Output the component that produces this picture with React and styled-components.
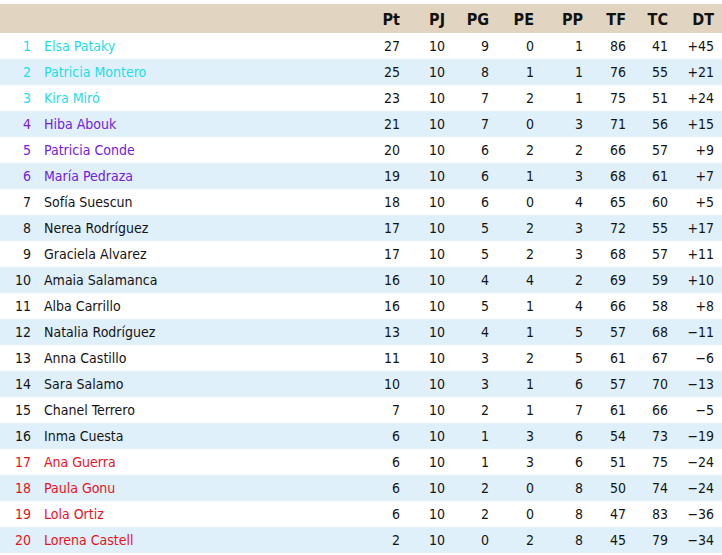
import React from 'react';
import styled, { createGlobalStyle } from 'styled-components';

const GlobalStyle = createGlobalStyle`
  html, body {
    margin: 0;
    padding: 0;
    background: #fff;
  }
`;

const rows = [
  ['Elsa Pataky', 27, 10, 9, 0, 1, 86, 41, '+45', 'top'],
  ['Patricia Montero', 25, 10, 8, 1, 1, 76, 55, '+21', 'top'],
  ['Kira Miró', 23, 10, 7, 2, 1, 75, 51, '+24', 'top'],
  ['Hiba Abouk', 21, 10, 7, 0, 3, 71, 56, '+15', 'mid'],
  ['Patricia Conde', 20, 10, 6, 2, 2, 66, 57, '+9', 'mid'],
  ['María Pedraza', 19, 10, 6, 1, 3, 68, 61, '+7', 'mid'],
  ['Sofía Suescun', 18, 10, 6, 0, 4, 65, 60, '+5'],
  ['Nerea Rodríguez', 17, 10, 5, 2, 3, 72, 55, '+17'],
  ['Graciela Alvarez', 17, 10, 5, 2, 3, 68, 57, '+11'],
  ['Amaia Salamanca', 16, 10, 4, 4, 2, 69, 59, '+10'],
  ['Alba Carrillo', 16, 10, 5, 1, 4, 66, 58, '+8'],
  ['Natalia Rodríguez', 13, 10, 4, 1, 5, 57, 68, '−11'],
  ['Anna Castillo', 11, 10, 3, 2, 5, 61, 67, '−6'],
  ['Sara Salamo', 10, 10, 3, 1, 6, 57, 70, '−13'],
  ['Chanel Terrero', 7, 10, 2, 1, 7, 61, 66, '−5'],
  ['Inma Cuesta', 6, 10, 1, 3, 6, 54, 73, '−19'],
  ['Ana Guerra', 6, 10, 1, 3, 6, 51, 75, '−24', 'low'],
  ['Paula Gonu', 6, 10, 2, 0, 8, 50, 74, '−24', 'low'],
  ['Lola Ortiz', 6, 10, 2, 0, 8, 47, 83, '−36', 'low'],
  ['Lorena Castell', 2, 10, 0, 2, 8, 45, 79, '−34', 'low'],
];

const headers = ['Pt', 'PJ', 'PG', 'PE', 'PP', 'TF', 'TC', 'DT'];
const colWidths = [46, 45, 44, 45, 49, 43, 42, 46];

const zoneColors = {
  top: '#1fdde6',
  mid: '#7420dc',
  low: '#e4141c',
};

const Page = styled.div`
  padding-top: 4px;
  width: 722px;
`;

const Table = styled.table`
  width: 722px;
  border-collapse: collapse;
  table-layout: fixed;
  font-family: "DejaVu Sans Condensed", "DejaVu Sans", sans-serif;
  font-stretch: condensed;
  font-size: 14px;
  color: #141414;
`;

const HeadRow = styled.tr`
  background: #e1d5c1;
  height: 29px;
`;

const HeadCell = styled.th`
  text-align: right;
  font-weight: bold;
  font-size: 16px;
  padding: 1px 8px 0 0;
  color: #111;
`;

const Row = styled.tr`
  height: 26px;
  background: ${p => (p.$alt ? '#dff0fb' : '#ffffff')};
  color: ${p => zoneColors[p.$zone] || '#141414'};
`;

const RankCell = styled.td`
  text-align: right;
  padding: 0 5px 0 0;
`;

const NameCell = styled.td`
  text-align: left;
  padding: 0 0 0 8px;
  white-space: nowrap;
`;

const NumCell = styled.td`
  text-align: right;
  padding: 0 8px 0 0;
  color: #141414;
`;

export default function App() {
  return (
    <Page>
      <GlobalStyle />
      <Table>
        <colgroup>
          <col style={{ width: 36 }} />
          <col />
          {colWidths.map((w, i) => (
            <col key={i} style={{ width: w }} />
          ))}
        </colgroup>
        <thead>
          <HeadRow>
            <HeadCell />
            <HeadCell />
            {headers.map(h => (
              <HeadCell key={h}>{h}</HeadCell>
            ))}
          </HeadRow>
        </thead>
        <tbody>
          {rows.map((r, i) => (
            <Row key={r[0]} $alt={i % 2 === 1} $zone={r[9]}>
              <RankCell>{i + 1}</RankCell>
              <NameCell>{r[0]}</NameCell>
              {r.slice(1, 9).map((v, j) => (
                <NumCell key={j}>{v}</NumCell>
              ))}
            </Row>
          ))}
        </tbody>
      </Table>
    </Page>
  );
}
